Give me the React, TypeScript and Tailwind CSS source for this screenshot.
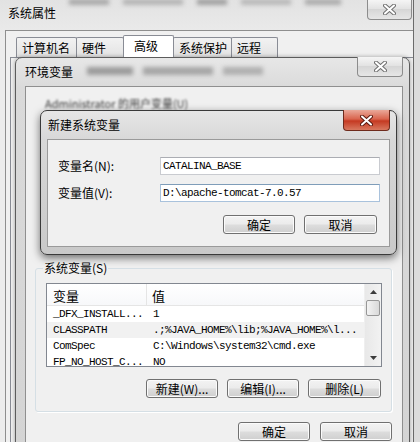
import React from 'react';

function CloseX(props: { red?: boolean }) {
  const red = props.red;
  return (
    <svg width="13" height="11" viewBox="0 0 13 11">
      <path d="M2 1.5 L11 9.5 M11 1.5 L2 9.5" stroke={red ? '#5b1a10' : '#6f6f6f'} strokeWidth="4" strokeLinecap="round" fill="none" />
      <path d="M2 1.5 L11 9.5 M11 1.5 L2 9.5" stroke="#ffffff" strokeWidth="2" strokeLinecap="round" fill="none" />
    </svg>
  );
}

function Btn(props: { label: string; w: string }) {
  return (
    <div
      className={
        'h-[19px] ' +
        props.w +
        ' flex items-center justify-center rounded-[3px] border border-[#707070] bg-[linear-gradient(#f3f3f3,#ebebeb_48%,#dddddd_52%,#cfcfcf)] shadow-[inset_0_0_0_1px_#fbfbfb] text-[12px] leading-[14px]'
      }
    >
      {props.label}
    </div>
  );
}

function Arrow(props: { up?: boolean }) {
  return (
    <svg width="7" height="4" viewBox="0 0 7 4">
      <path d={props.up ? 'M0 4 L3.5 0 L7 4 Z' : 'M0 0 L3.5 4 L7 0 Z'} fill="#3c3c3c" />
    </svg>
  );
}

const rows = [
  { name: '_DFX_INSTALL...', value: '1', hot: false },
  { name: 'CLASSPATH', value: '.;%JAVA_HOME%\\lib;%JAVA_HOME%\\l...', hot: true },
  { name: 'ComSpec', value: 'C:\\Windows\\system32\\cmd.exe', hot: false },
  { name: 'FP_NO_HOST_C...', value: 'NO', hot: false },
];

const tabs = [
  { label: '计算机名', w: 'w-[61px]', on: false },
  { label: '硬件', w: 'w-[48px]', on: false },
  { label: '高级', w: 'w-[51px]', on: true },
  { label: '系统保护', w: 'w-[59px]', on: false },
  { label: '远程', w: 'w-[47px]', on: false },
];

const mono = "font-['Liberation_Mono',monospace] text-[11px] tracking-[-0.6px]";

export default function App() {
  return (
    <div className="relative w-[420px] h-[442px] overflow-hidden bg-[#dcdcdc] font-['Noto_Sans_CJK_SC',sans-serif] text-[12px] leading-[14px] text-black">
      {/* 系统属性 */}
      <div className="absolute left-[-2px] top-[-2px] w-[416px] h-[470px] bg-[linear-gradient(#e2e2e2,#ececec_40px)] border border-[#6b6b6b]">
        {/* glass blur behind the title bar */}
        <div className="absolute left-[70px] top-[0px] flex gap-[14px] blur-[2px]">
          <div className="w-[40px] h-[6px] bg-[#a8a8a8]"></div>
          <div className="w-[60px] h-[6px] bg-[#b4b4b4]"></div>
          <div className="w-[30px] h-[6px] bg-[#a0a0a0]"></div>
          <div className="w-[50px] h-[6px] bg-[#b8b8b8]"></div>
          <div className="w-[36px] h-[6px] bg-[#ababab]"></div>
        </div>
        <div className="relative h-[31px] pl-[9px] pt-[7px]">系统属性</div>
        <div className="absolute right-[1px] top-[1px] w-[45px] h-[20px] flex items-center justify-center rounded-b-[4px] border border-t-0 border-[#8c8c8c] bg-[linear-gradient(#f5f5f5,#e1e1e1_50%,#d6d6d6_50%,#e6e6e6)]">
          <CloseX />
        </div>
        <div className="ml-[6px] h-full border-l border-t border-[#8e8e8e] bg-[#f0f0f0] pl-[10px] pt-[4px]">
          <div className="flex items-end">
            {tabs.map((t, i) => (
              <div
                key={t.label}
                className={
                  t.w +
                  (i > 0 ? ' -ml-px' : '') +
                  (t.on
                    ? ' relative z-10 h-[22px] bg-white pl-[10px] pt-[3px]'
                    : ' h-[20px] bg-[linear-gradient(#f2f2f2,#e3e3e3)] pl-[5px] pt-[3px]') +
                  ' border border-b-0 border-[#898c95] rounded-t-[2px] text-[12px] leading-[14px] whitespace-nowrap'
                }
              >
                {t.label}
              </div>
            ))}
          </div>
          <div className="ml-[-6px] h-[400px] border-l border-t border-[#898c95]"></div>
        </div>
      </div>

      {/* 环境变量 */}
      <div className="absolute left-[15px] top-[57px] w-[395px] h-[400px] rounded-t-[7px] border border-[#5c5c5c] bg-[linear-gradient(#e7e7e7,#dadada_30px,#d4d4d4)] shadow-[0_0_4px_rgba(0,0,0,0.35)]">
        <div className="flex h-[28px] pl-[9px] pt-[7px]">
          <span>环境变量</span>
          <div className="ml-[14px] mt-[2px] flex gap-[10px] blur-[2px]">
            <div className="w-[46px] h-[8px] bg-[#9c9c9c]"></div>
            <div className="w-[70px] h-[8px] bg-[#a6a6a6]"></div>
            <div className="w-[40px] h-[8px] bg-[#b0b0b0]"></div>
          </div>
        </div>
        <div className="absolute right-[6px] top-[-1px] w-[46px] h-[20px] flex items-center justify-center rounded-b-[4px] border border-t-0 border-[#8c8c8c] bg-[linear-gradient(#f5f5f5,#e1e1e1_50%,#d6d6d6_50%,#e6e6e6)]">
          <CloseX />
        </div>
        <div className="ml-[9px] mr-[6px] h-[380px] border border-[#8f8f8f] bg-[#f0f0f0]">
          <div className="h-[181px] pl-[19px] pt-[11px]">
            <div className="text-[11px] leading-[11px] text-[#3a3a3a] blur-[0.8px] whitespace-nowrap">Administrator 的用户变量(U)</div>
          </div>
          <div className="relative ml-[9px] w-[357px] h-[144px] rounded-[3px] border border-[#d5dfe5] shadow-[1px_1px_0_#ffffff]">
            <div className="absolute left-[7px] top-[-8px] bg-[#f0f0f0] px-[1px]">系统变量(S)</div>
            <div className="ml-[10px] mt-[14px] w-[336px] h-[84px] flex border border-[#828790] bg-white overflow-hidden">
              <div className="flex-1 flex flex-col">
                <div className="flex h-[22px] shrink-0 border-b border-[#e5e5e5] bg-[linear-gradient(#ffffff,#f7f8fa)]">
                  <div className="w-[100px] pl-[6px] pt-[4px] border-r border-[#e5e5e5] text-[13px] leading-[15px]">变量</div>
                  <div className="pl-[5px] pt-[4px] text-[13px] leading-[15px]">值</div>
                </div>
                {rows.map((r) => (
                  <div key={r.name} className={'flex h-[16px] shrink-0 items-center ' + mono + (r.hot ? ' bg-[#f1f1f1]' : '')}>
                    <div className="w-[101px] pl-[6px] whitespace-nowrap">{r.name}</div>
                    <div className="pl-[5px] whitespace-nowrap">{r.value}</div>
                  </div>
                ))}
              </div>
              <div className="w-[17px] shrink-0 flex flex-col bg-[linear-gradient(90deg,#e8e8e8,#f2f2f2)] border-l border-[#efefef]">
                <div className="h-[16px] flex items-center justify-center">
                  <Arrow up />
                </div>
                <div className="mx-[1px] h-[16px] rounded-[2px] border border-[#979797] bg-[linear-gradient(90deg,#f3f3f3,#e6e6e6_50%,#d9d9d9)]"></div>
                <div className="flex-1"></div>
                <div className="h-[16px] flex items-center justify-center">
                  <Arrow />
                </div>
              </div>
            </div>
            <div className="mt-[12px] flex justify-end gap-[9px] pr-[10px]">
              <Btn label="新建(W)..." w="w-[72px]" />
              <Btn label="编辑(I)..." w="w-[72px]" />
              <Btn label="删除(L)" w="w-[73px]" />
            </div>
          </div>
          <div className="mt-[10px] flex justify-end gap-[10px] pr-[10px]">
            <Btn label="确定" w="w-[72px]" />
            <Btn label="取消" w="w-[72px]" />
          </div>
        </div>
      </div>

      {/* 新建系统变量 */}
      <div className="absolute left-[40px] top-[110px] w-[357px] h-[145px] rounded-[7px] border border-[#3a3a3a] bg-[linear-gradient(#e6e6e6,#d8d8d8_28px,#c9c9c9)] shadow-[0_3px_8px_rgba(0,0,0,0.55)]">
        <div className="h-[28px] pl-[7px] pt-[7px]">新建系统变量</div>
        <div className="absolute right-[6px] top-[-1px] w-[47px] h-[21px] flex items-center justify-center rounded-b-[4px] border border-t-0 border-[#6e2a1c] bg-[linear-gradient(#eaa899,#d9654e_45%,#c53a22_55%,#d8785f)]">
          <CloseX red />
        </div>
        <div className="mx-[6px] h-[108px] border border-[#9a9a9a] bg-[#f0f0f0] pt-[17px]">
          <div className="flex items-center h-[18px]">
            <div className="w-[112px] pl-[10px]">变量名(N):</div>
            <div className={'w-[220px] h-[18px] border border-[#c9cbd0] border-t-[#abadb3] bg-white pl-[2px] flex items-center ' + mono}>CATALINA_BASE</div>
          </div>
          <div className="mt-[9px] flex items-center h-[18px]">
            <div className="w-[112px] pl-[10px]">变量值(V):</div>
            <div className={'w-[220px] h-[18px] border border-[#a9c2dc] border-t-[#7f9db9] bg-white pl-[2px] flex items-center ' + mono}>D:\apache-tomcat-7.0.57</div>
          </div>
          <div className="mt-[13px] flex justify-end gap-[9px] pr-[12px]">
            <Btn label="确定" w="w-[72px]" />
            <Btn label="取消" w="w-[73px]" />
          </div>
        </div>
      </div>
    </div>
  );
}
